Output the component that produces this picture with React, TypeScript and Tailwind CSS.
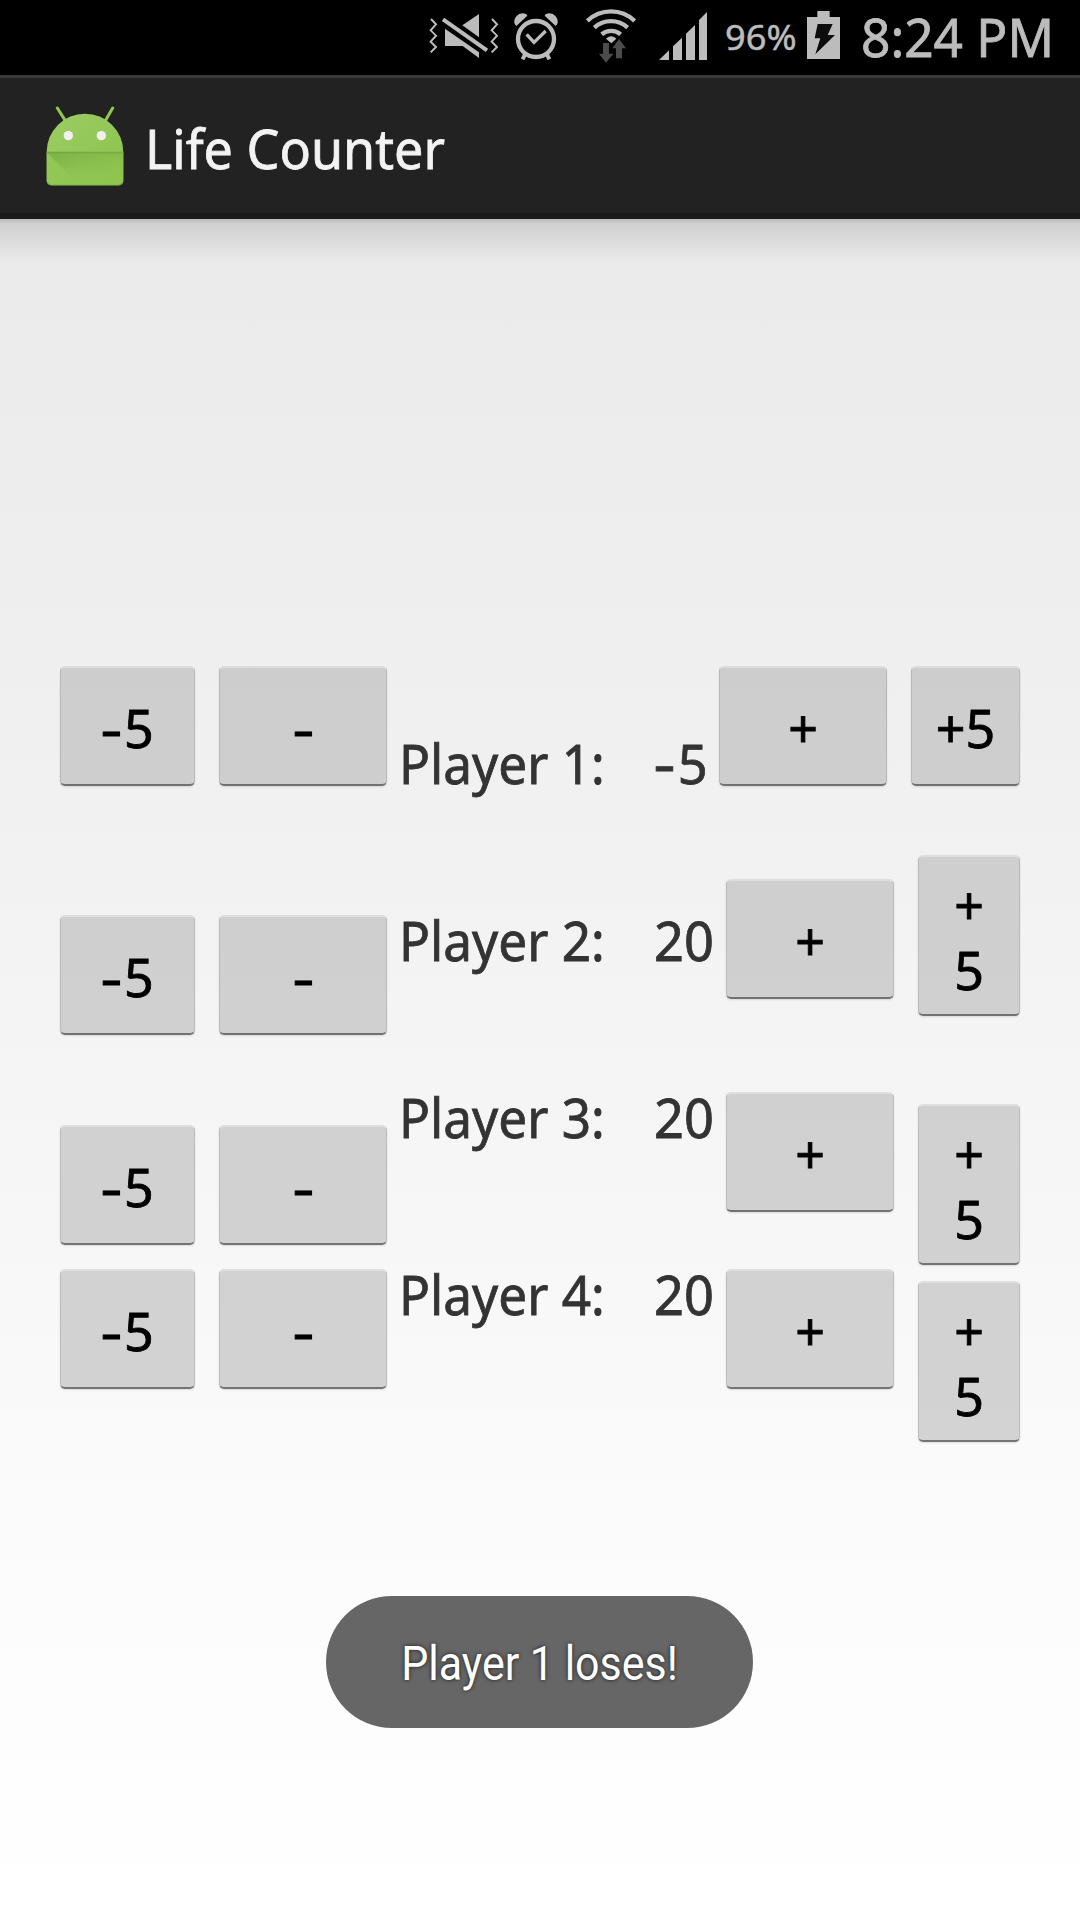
import React from "react";

function MuteIcon() {
  return (
    <svg className="h-[46px] w-[70px]" viewBox="27 39 210 138" fill="none">
      <path d="M33 57L48 73L32 91L48 107L32 125L48 141L32 157M216 57L231 73L215 91L231 107L215 125L231 141L215 157" stroke="#bcbcbc" strokeWidth="6" />
      <path d="M75 86L177 157V174L128 138H75ZM177 42V112L127 76Z" fill="#bcbcbc" />
      <path d="M69 58L201 151" stroke="#bcbcbc" strokeWidth="12" />
    </svg>
  );
}

function AlarmIcon() {
  return (
    <svg className="h-[48px] w-[44px]" viewBox="282 36 132 144" fill="none">
      <path d="M289 78C280 70 281 56 291 47C301 38 316 37 322 47ZM407 78C416 70 415 56 405 47C395 38 380 37 374 47Z" fill="#bcbcbc" />
      <circle cx="348" cy="117" r="54" stroke="#bcbcbc" strokeWidth="13" />
      <path d="M320 103L342 127L377 93" stroke="#bcbcbc" strokeWidth="10" />
      <path d="M315 163L308 178M381 163L388 178" stroke="#bcbcbc" strokeWidth="12" />
    </svg>
  );
}

function WifiIcon() {
  return (
    <svg className="h-[54px] w-[50px]" viewBox="498 26 150 162" fill="none">
      <path d="M502 62A102 102 0 0 1 644 62" stroke="#bcbcbc" strokeWidth="13" />
      <path d="M523 82A74 74 0 0 1 623 82" stroke="#bcbcbc" strokeWidth="13" />
      <path d="M545 102A44 44 0 0 1 602 102" stroke="#bcbcbc" strokeWidth="13" />
      <path d="M558 115C566 105 581 105 589 115L574 129Z" fill="#bcbcbc" />
      <path d="M549 128H567V160H580L558 187L537 160H549ZM588 174V144H577L597 116L618 144H606V174Z" fill="#4c4c4c" />
    </svg>
  );
}

function SignalIcon() {
  return (
    <svg className="h-[48px] w-[48px]" viewBox="717 36 144 144" fill="#bcbcbc">
      <path d="M717 180L747 151V180ZM759 139L786 113V180H759ZM798 101L825 75V180H798ZM837 60L861 36V180H837Z" />
    </svg>
  );
}

function BatteryIcon() {
  return (
    <svg className="h-[48px] w-[33px]" viewBox="321 33 99 144">
      <path d="M352 33H389V51H420V177H321V51H352Z" fill="#bcbcbc" />
      <path d="M353 72H398L383 105H405L346 163L361 115H344Z" fill="#0c0c0c" />
    </svg>
  );
}

function AndroidIcon() {
  return (
    <svg className="h-[80px] w-[78px]" viewBox="48 109 234 240">
      <defs>
        <linearGradient id="head" x1="0" y1="0" x2="1" y2="1">
          <stop offset="0" stopColor="#9ccc65" />
          <stop offset="1" stopColor="#8bc34a" />
        </linearGradient>
        <linearGradient id="fold" x1="0" y1="0" x2="0.45" y2="1">
          <stop offset="0" stopColor="#6d9c3c" stopOpacity="0.6" />
          <stop offset="1" stopColor="#8bc34a" stopOpacity="0" />
        </linearGradient>
        <linearGradient id="crease" x1="0" y1="0" x2="0" y2="1">
          <stop offset="0" stopColor="#5f8f35" stopOpacity="0.6" />
          <stop offset="1" stopColor="#8bc34a" stopOpacity="0" />
        </linearGradient>
      </defs>
      <path d="M82 115L106 153M248 115L226 153" stroke="#8fc751" strokeWidth="9" strokeLinecap="round" />
      <path d="M50 247A115 115 0 0 1 280 247V332Q280 347 265 347H65Q50 347 50 332Z" fill="url(#head)" />
      <path d="M50 247H280V332Q280 347 265 347H65Q50 347 50 332Z" fill="#8fc751" fillOpacity="0.6" />
      <path d="M50 247H280V347H146Z" fill="url(#fold)" />
      <path d="M50 246H280V256H50Z" fill="url(#crease)" />
      <path d="M53 340Q57 347 65 347H265Q273 347 277 340" fill="none" stroke="#5d8632" strokeWidth="2" />
      <circle cx="115" cy="198" r="14" fill="#f1f1f1" />
      <circle cx="214" cy="198" r="14" fill="#f1f1f1" />
    </svg>
  );
}

const buttonBase =
  "flex shrink-0 flex-col items-center justify-center rounded-[5px] border-x border-t-2 border-b-2 border-x-black/10 border-t-white/30 border-b-black/45 bg-[rgba(171,171,171,0.5)] pt-[2px] text-[52px] leading-[65px] text-black [-webkit-text-stroke:0.8px_#000] shadow-[0_1px_2px_rgba(0,0,0,0.12)]";

function Btn({ className, children }: { className: string; children: React.ReactNode }) {
  return <button className={`${buttonBase} ${className}`}>{children}</button>;
}

function Dash() {
  return <span className="inline-block scale-x-[1.3]">-</span>;
}

function MinusFive() {
  return (
    <span className="ml-[2px] flex gap-[4px]">
      <Dash />
      <span>5</span>
    </span>
  );
}

const leftOffsets = ["mt-0", "mt-[129px]", "mt-[90px]", "mt-[24px]"];
const plusButtons = ["w-[168px]", "ml-[7px] mt-[93px] w-[168px]", "ml-[7px] mt-[93px] w-[168px]", "ml-[7px] mt-[57px] w-[168px]"];
const plusFiveTall = ["mt-[69px]", "mt-[88px]", "mt-[16px]"];
const players = [
  { name: "Player 1:", life: -5 },
  { name: "Player 2:", life: 20 },
  { name: "Player 3:", life: 20 },
  { name: "Player 4:", life: 20 },
];

export default function App() {
  return (
    <div className="flex h-[1920px] w-[1080px] flex-col overflow-hidden bg-[linear-gradient(to_bottom,#e8e8e8_0%,#efefef_34%,#fcfcfc_83%,#ffffff_100%)] font-['Noto_Sans',sans-serif]">
      <header className="flex h-[75px] shrink-0 items-start justify-end bg-black text-[#bcbcbc]">
        <div className="mt-[13px]"><MuteIcon /></div>
        <div className="mt-[12px] ml-[15px]"><AlarmIcon /></div>
        <div className="mt-[9px] ml-[28px]"><WifiIcon /></div>
        <div className="mt-[12px] ml-[23px]"><SignalIcon /></div>
        <div className="mt-[12px] ml-[18px] w-[71px] text-[35px] leading-[50px] whitespace-nowrap [-webkit-text-stroke:0.5px_#bcbcbc]">
          <span className="inline-block origin-left scale-x-[1.035]">96%</span>
        </div>
        <div className="mt-[11px] ml-[11px]"><BatteryIcon /></div>
        <div className="mt-[5px] mr-[25px] ml-[21px] w-[194px] text-[53px] leading-[64px] whitespace-nowrap [-webkit-text-stroke:0.8px_#bcbcbc]">
          <span className="inline-block origin-left scale-x-[0.97]">8:24 PM</span>
        </div>
      </header>

      <div className="flex h-[144px] shrink-0 items-start border-t-[3px] border-b-[6px] border-t-[#3a3a3a] border-b-[#1a1a1a] bg-[#222222]">
        <div className="mt-[28px] ml-[46px]"><AndroidIcon /></div>
        <h1 className="mt-[38px] ml-[21px] text-[54px] leading-[64px] whitespace-nowrap text-[#f3f3f3] [-webkit-text-stroke:0.8px_#f3f3f3]">
          <span className="inline-block origin-left scale-x-[0.964]">Life Counter</span>
        </h1>
      </div>
      <div className="h-[3px] shrink-0 bg-[#c1c1c1]" />
      <div className="h-[40px] shrink-0 bg-linear-to-b from-black/12 to-transparent" />

      <main className="flex h-[1334px] shrink-0 items-start pt-[404px] pl-[60px]">
        <div className="flex w-[135px] flex-col">
          {leftOffsets.map((m, i) => (
            <Btn key={i} className={`h-[120px] w-[135px] ${m}`}><MinusFive /></Btn>
          ))}
        </div>
        <div className="ml-[24px] flex w-[168px] flex-col">
          {leftOffsets.map((m, i) => (
            <Btn key={i} className={`h-[120px] w-[168px] ${m}`}><Dash /></Btn>
          ))}
        </div>
        <div className="mt-[65px] ml-[12px] flex w-[320px] flex-col gap-[113px] text-[54px] leading-[64px] text-[#333333] [-webkit-text-stroke:0.8px_#333333]">
          {players.map((p) => (
            <div key={p.name} className="flex whitespace-nowrap">
              <span className="w-[255px]">
                <span className="inline-block origin-left scale-x-[0.95]">{p.name}</span>
              </span>
              <span className="inline-block origin-left scale-x-[0.97]">
                {p.life < 0 ? (
                  <span className="ml-[2px] flex gap-[5px]">
                    <Dash />
                    <span>{Math.abs(p.life)}</span>
                  </span>
                ) : (
                  p.life
                )}
              </span>
            </div>
          ))}
        </div>
        <div className="flex w-[175px] flex-col">
          {plusButtons.map((c, i) => (
            <Btn key={i} className={`h-[120px] ${c}`}>+</Btn>
          ))}
        </div>
        <div className="ml-[17px] flex w-[109px] flex-col items-end">
          <Btn className="h-[120px] w-[109px]">
            <span>+5</span>
          </Btn>
          {plusFiveTall.map((m, i) => (
            <Btn key={i} className={`h-[161px] w-[102px] ${m}`}>
              <span>+</span>
              <span>5</span>
            </Btn>
          ))}
        </div>
      </main>

      <div className="mr-px flex h-[132px] w-[427px] shrink-0 items-center justify-center self-center rounded-[66px] bg-[#666666] font-['Roboto',sans-serif] text-[48px] leading-[56px] whitespace-nowrap text-white">
        <span className="inline-block scale-x-[0.895] pt-[3px] [text-shadow:0_0_5px_rgba(0,0,0,0.75)]">Player 1 loses!</span>
      </div>
    </div>
  );
}
